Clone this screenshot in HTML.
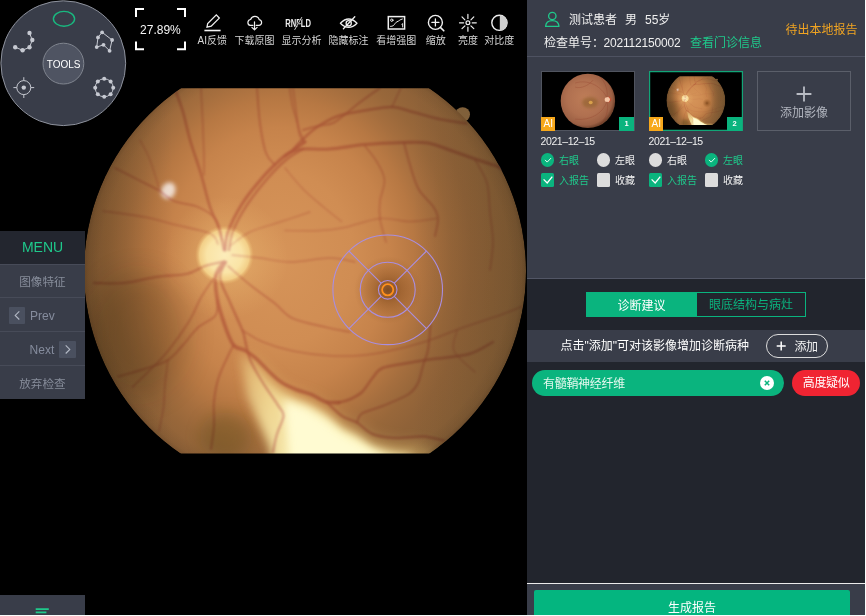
<!DOCTYPE html>
<html lang="zh">
<head>
<meta charset="utf-8">
<title>眼底影像阅片</title>
<style>
*{box-sizing:border-box;margin:0;padding:0}
html,body{width:866px;height:616px;overflow:hidden;background:#000}
body{position:relative;-webkit-font-smoothing:antialiased;font-family:"Liberation Sans","Noto Sans CJK SC",sans-serif;color:#fff;font-size:12px;line-height:1}
.abs{position:absolute}
#viewer{position:absolute;left:0;top:0;width:527px;height:616px;background:#000;overflow:hidden;will-change:transform}
#fundus{position:absolute;left:0;top:0;width:527px;height:616px}
/* tools wheel */
#wheel{position:absolute;left:0;top:0;width:128px;height:128px}
/* toolbar */
.tb{position:absolute;top:0;height:50px;text-align:center;color:#e4e4e4;font-size:10px;white-space:nowrap}
.tb svg{position:absolute;left:50%;top:0}
.tb span{position:absolute;left:50%;top:34px;transform:translateX(-50%);line-height:12px}
#zoomv{position:absolute;left:135px;top:8px;width:51px;height:42px}
#zoomv span{position:absolute;left:0;width:51px;top:15px;text-align:center;font-size:12px;line-height:14px;color:#f2f2f2}
/* left menu */
#menu{position:absolute;left:0;top:230.8px;width:84.7px;height:168.6px;overflow:hidden;background:#393d49}
#menu .row{position:absolute;left:0;width:85px;height:35px;border-top:1px solid #474b58;color:#878d9b;font-size:12px}
#menu .en{color:#858c9d}
#menu .head{position:absolute;left:0;top:0;width:85px;height:33px;background:#23262f;color:#1fc98b;font-size:14px;text-align:center;line-height:33px}
.nb{position:absolute;width:16.5px;height:16.8px;background:#4a505f;border-radius:1px}
#btm{position:absolute;left:0;top:595.2px;width:84.6px;height:21px;background:#393d49}
/* right panel */
#panel{position:absolute;left:527px;top:0;width:339px;height:616px;background:#22252d;overflow:hidden;will-change:transform}
#phead{position:absolute;left:0;top:0;width:339px;height:279.2px;background:#393d49;border-bottom:1.1px solid #525665}
.thumb{position:absolute;top:70.8px;width:94.4px;height:60.3px;background:#000;box-shadow:inset 0 0 0 1px #50545f;overflow:hidden}
.lbl{position:absolute;font-size:10px;line-height:12px;white-space:nowrap;color:#f0f0f0}
.g{color:#1fc98b}
.radio{position:absolute;width:13.6px;height:13.6px;border-radius:50%;background:#dcdcdc}
.radio.on,.cb.on{background:#0ab47e}
.cb{position:absolute;width:13.4px;height:13.4px;border-radius:1.5px;background:#dcdcdc}
.t12{font-size:12px;line-height:14px;white-space:nowrap}
.badge{position:absolute;height:14px;line-height:14px;text-align:center;color:#fff}
.badge.ai{width:14.2px;background:#f7a81b;font-size:10px;line-height:13px}
.badge.no{width:15.6px;background:#0ab47e;font-size:7.5px;font-weight:bold}
.date{font-size:10.5px;letter-spacing:-0.42px}
.radio svg,.cb svg{position:absolute;left:0;top:0}
</style>
</head>
<body>
<div id="viewer">
<svg id="fundus" width="527" height="616" viewBox="0 0 527 616">
<defs>
<clipPath id="fc"><rect x="0" y="88.3" width="527" height="365.2"/></clipPath>
<clipPath id="cc"><circle cx="305" cy="271" r="221"/></clipPath>
<radialGradient id="fg" gradientUnits="userSpaceOnUse" cx="280" cy="258" r="245" gradientTransform="translate(280 258) scale(1 1.18) translate(-280 -258)">
<stop offset="0" stop-color="#d69459"/>
<stop offset="0.3" stop-color="#d08d53"/>
<stop offset="0.45" stop-color="#c6834b"/>
<stop offset="0.55" stop-color="#b77843"/>
<stop offset="0.63" stop-color="#a56e3e"/>
<stop offset="0.7" stop-color="#98673a"/>
<stop offset="0.78" stop-color="#8f6238"/>
<stop offset="0.88" stop-color="#896037"/>
<stop offset="1" stop-color="#825d36"/>
</radialGradient>
<radialGradient id="vg" gradientUnits="userSpaceOnUse" cx="305" cy="271" r="221">
<stop offset="0.93" stop-color="#000" stop-opacity="0"/>
<stop offset="0.98" stop-color="#000" stop-opacity="0.05"/>
<stop offset="1" stop-color="#000" stop-opacity="0.14"/>
</radialGradient>
<linearGradient id="sg" gradientUnits="userSpaceOnUse" x1="85" y1="0" x2="527" y2="0">
<stop offset="0" stop-color="#1a1200" stop-opacity="0.2"/>
<stop offset="0.2" stop-color="#1a1200" stop-opacity="0"/>
<stop offset="0.74" stop-color="#1a1200" stop-opacity="0"/>
<stop offset="1" stop-color="#1a1200" stop-opacity="0.13"/>
</linearGradient>
<radialGradient id="disc" cx="0.5" cy="0.5" r="0.5">
<stop offset="0" stop-color="#fcecba"/>
<stop offset="0.6" stop-color="#fae4a6"/>
<stop offset="0.84" stop-color="#f5d48c" stop-opacity="0.92"/>
<stop offset="1" stop-color="#e8b46c" stop-opacity="0"/>
</radialGradient>
<radialGradient id="dglow" cx="0.5" cy="0.5" r="0.5">
<stop offset="0" stop-color="#ffdc8c" stop-opacity="0.4"/>
<stop offset="0.5" stop-color="#ffd888" stop-opacity="0.18"/>
<stop offset="1" stop-color="#ffd080" stop-opacity="0"/>
</radialGradient>
<radialGradient id="mac" cx="0.5" cy="0.5" r="0.5">
<stop offset="0" stop-color="#6b3a12" stop-opacity="0.75"/>
<stop offset="0.4" stop-color="#7a4416" stop-opacity="0.4"/>
<stop offset="1" stop-color="#8a5020" stop-opacity="0"/>
</radialGradient>
<filter id="b2" x="-30%" y="-30%" width="160%" height="160%"><feGaussianBlur stdDeviation="2"/></filter>
<filter id="b3" x="-30%" y="-30%" width="160%" height="160%"><feGaussianBlur stdDeviation="2.6"/></filter>
<filter id="b4" x="-30%" y="-30%" width="160%" height="160%"><feGaussianBlur stdDeviation="4"/></filter>
<filter id="b12" x="-50%" y="-50%" width="200%" height="200%"><feGaussianBlur stdDeviation="14"/></filter>
<filter id="b8" x="-30%" y="-30%" width="160%" height="160%"><feGaussianBlur stdDeviation="8"/></filter>
<filter id="b05"><feGaussianBlur stdDeviation="0.8"/></filter>
<linearGradient id="pg" gradientUnits="userSpaceOnUse" x1="243" y1="362" x2="335" y2="432">
<stop offset="0" stop-color="#f6e29a" stop-opacity="0.3"/>
<stop offset="0.45" stop-color="#f9e9a6" stop-opacity="0.75"/>
<stop offset="1" stop-color="#fcf2b8" stop-opacity="1"/>
</linearGradient>
<filter id="b1"><feGaussianBlur stdDeviation="1.3"/></filter>
<filter id="b6" x="-30%" y="-30%" width="160%" height="160%"><feGaussianBlur stdDeviation="5"/></filter>
<mask id="pm" maskUnits="userSpaceOnUse" x="100" y="300" width="427" height="250"><path filter="url(#b1)" fill="#fff" d="M150 336 L238 340 L247 353 L256.500 360 L269 372.500 L282 384 L297 391.500 L312 396.500 L327 404 L343 418 L358 424.500 L373 436 L396 440 L424 438.500 L448 443 L480 450 L480 530 L150 530 Z"/></mask>
</defs>
<g clip-path="url(#fc)" id="fg0">
<circle cx="462.6" cy="114.6" r="7.4" fill="#80603a"/>
<g clip-path="url(#cc)">
<circle cx="305" cy="271" r="221" fill="url(#fg)"/>
<!-- macula -->
<circle cx="388" cy="290" r="34" fill="url(#mac)"/>
<!-- disc -->
<circle cx="226" cy="258" r="62" fill="url(#dglow)"/>
<circle cx="224.5" cy="255" r="29.5" fill="url(#disc)"/>
<!-- white spot -->
<ellipse cx="168.5" cy="190.5" rx="7" ry="8.5" fill="#f6eae2" opacity="0.88" filter="url(#b2)" transform="rotate(25 168 190)"/>
<!-- myelinated fibres -->
<ellipse cx="226" cy="436" rx="26" ry="24" fill="#50420c" opacity="0.3" filter="url(#b8)"/>
<path filter="url(#b8)" d="M246 360 L253 392 L264 420 L274 447 L286 500 L450 500 L436 452 L418 446 L395 445 L372 440 L357 429 L342 422 L326 408 L311 400 L296 395 L281 388 L268 376 L255 363 L246 354 Z" fill="#f2d27e" opacity="0.5"/>
<g mask="url(#pm)">
<path filter="url(#b6)" d="M240 352 L247 396 L260 424 L270 446 L282 500 L425 500 L412 456 L392 453 L372 447 L357 436 L342 429 L326 415 L311 406 L296 400 L281 392 L268 381 L254 364 Z" fill="url(#pg)"/>
<path filter="url(#b4)" d="M284 400 L286 425 L294 500 L400 500 L380 456 L358 444 L340 434 L324 420 L306 408 Z" fill="#fffbd2"/>
</g>
<g fill="none" stroke="#dc9fb0" stroke-linecap="round" filter="url(#b05)" style="mix-blend-mode:multiply">
<path d="M225.0 250.0 C225.5 247.0 225.2 239.7 228.0 232.0 C230.8 224.3 236.2 213.2 242.0 204.0 C247.8 194.8 256.5 184.5 263.0 177.0 C269.5 169.5 276.2 163.3 281.0 159.0 C285.8 154.7 288.0 153.8 292.0 151.0 C296.0 148.2 302.8 143.5 305.0 142.0" stroke-width="3.1" stroke-opacity="0.77"/>
<path d="M229.0 250.0 C229.7 246.8 230.0 238.5 233.0 231.0 C236.0 223.5 241.2 213.8 247.0 205.0 C252.8 196.2 261.5 185.5 268.0 178.0 C274.5 170.5 280.2 164.8 286.0 160.0 C291.8 155.2 300.2 150.8 303.0 149.0" stroke-width="2.3" stroke-opacity="0.70"/>
<path d="M285.0 156.0 C286.0 155.3 288.0 153.2 291.0 152.0 C294.0 150.8 296.5 149.5 303.0 149.0 C309.5 148.5 319.7 149.8 330.0 149.0 C340.3 148.2 352.7 145.6 365.0 144.5 C377.3 143.4 393.5 142.8 404.0 142.5 C414.5 142.2 420.2 141.7 428.0 143.0 C435.8 144.3 443.2 147.8 451.0 150.5 C458.8 153.2 467.0 156.2 475.0 159.0 C483.0 161.8 492.3 164.2 499.0 167.0 C505.7 169.8 512.3 174.5 515.0 176.0" stroke-width="3.1" stroke-opacity="0.70"/>
<path d="M291.0 152.0 C293.0 149.8 298.5 143.2 303.0 139.0 C307.5 134.8 312.2 130.3 318.0 126.5 C323.8 122.7 329.7 118.8 338.0 116.0 C346.3 113.2 359.0 111.5 368.0 110.0 C377.0 108.5 384.5 106.7 392.0 107.0 C399.5 107.3 405.2 110.0 413.0 112.0 C420.8 114.0 430.2 117.1 439.0 119.0 C447.8 120.9 461.5 122.8 466.0 123.5" stroke-width="2.5" stroke-opacity="0.70"/>
<path d="M303.0 130.0 C305.5 129.3 313.0 127.2 318.0 126.0 C323.0 124.8 328.0 125.3 333.0 123.0 C338.0 120.7 343.7 115.3 348.0 112.0 C352.3 108.7 355.3 105.8 359.0 103.0 C362.7 100.2 366.5 97.5 370.0 95.0 C373.5 92.5 378.3 89.2 380.0 88.0" stroke-width="2.0" stroke-opacity="0.63"/>
<path d="M392.0 107.0 C393.0 104.8 396.5 97.2 398.0 94.0 C399.5 90.8 400.5 89.0 401.0 88.0" stroke-width="1.6" stroke-opacity="0.56"/>
<path d="M297.0 121.0 C296.3 118.8 294.0 112.0 293.0 108.0 C292.0 104.0 291.6 100.3 291.0 97.0 C290.4 93.7 289.8 89.5 289.5 88.0" stroke-width="1.7" stroke-opacity="0.56"/>
<path d="M305.0 142.0 C304.2 140.3 301.3 135.5 300.0 132.0 C298.7 128.5 297.5 122.8 297.0 121.0" stroke-width="1.6" stroke-opacity="0.56"/>
<path d="M365.0 146.0 C367.0 148.7 373.8 156.3 377.0 162.0 C380.2 167.7 384.0 173.5 384.5 180.0 C385.0 186.5 380.8 194.5 380.0 201.0 C379.2 207.5 379.0 212.2 380.0 219.0 C381.0 225.8 385.0 238.2 386.0 242.0" stroke-width="1.6" stroke-opacity="0.56"/>
<path d="M404.0 143.0 C405.0 146.7 407.6 157.3 410.0 165.0 C412.4 172.7 414.6 182.0 418.5 189.0 C422.4 196.0 430.2 202.0 433.5 207.0 C436.8 212.0 437.8 214.2 438.0 219.0 C438.2 223.8 435.5 233.2 435.0 236.0" stroke-width="1.9" stroke-opacity="0.63"/>
<path d="M475.0 159.5 C477.0 163.4 484.5 174.1 487.0 183.0 C489.5 191.9 489.0 203.2 490.0 213.0 C491.0 222.8 493.0 232.5 493.0 242.0 C493.0 251.5 490.5 265.3 490.0 270.0" stroke-width="1.6" stroke-opacity="0.56"/>
<path d="M285.0 168.0 C288.0 171.5 296.6 182.5 303.0 189.0 C309.4 195.5 317.1 201.6 323.5 207.0 C329.9 212.4 338.5 219.1 341.5 221.5" stroke-width="1.4" stroke-opacity="0.49"/>
<path d="M285.0 230.5 C290.9 230.5 310.6 231.0 320.5 230.5 C330.4 230.0 334.6 229.5 344.5 227.5 C354.4 225.5 369.1 219.5 380.0 218.5 C390.9 217.5 400.6 221.5 410.0 221.5 C419.4 221.5 432.1 219.0 436.5 218.5" stroke-width="1.4" stroke-opacity="0.49"/>
<path d="M224.0 250.0 C223.2 246.3 221.3 235.2 219.0 228.0 C216.7 220.8 213.0 216.0 210.0 207.0 C207.0 198.0 204.2 184.9 201.0 174.0 C197.8 163.1 193.5 151.8 190.5 141.5 C187.5 131.2 185.4 120.2 183.0 112.0 C180.6 103.8 177.2 95.3 176.0 92.0" stroke-width="2.6" stroke-opacity="0.70"/>
<path d="M204.0 175.0 C204.0 172.3 204.2 168.5 204.0 159.0 C203.8 149.5 203.0 129.8 202.5 118.0 C202.0 106.2 201.2 93.0 201.0 88.0" stroke-width="1.6" stroke-opacity="0.56"/>
<path d="M257.0 88.0 C257.5 93.9 258.5 112.7 260.0 123.5 C261.5 134.3 263.5 146.1 266.0 153.0 C268.5 159.9 273.5 163.0 275.0 165.0" stroke-width="1.9" stroke-opacity="0.63"/>
<path d="M293.0 88.0 C293.5 91.7 295.0 102.6 296.0 110.0 C297.0 117.4 297.8 127.2 299.0 132.5 C300.2 137.8 302.3 140.4 303.0 142.0" stroke-width="1.7" stroke-opacity="0.56"/>
<path d="M222.0 240.0 C220.9 236.5 219.5 224.5 215.5 219.0 C211.5 213.5 204.9 210.0 198.0 207.0 C191.1 204.0 180.5 203.8 174.0 201.0 C167.5 198.2 164.9 194.0 159.0 190.5 C153.1 187.0 145.8 183.8 138.5 180.0 C131.2 176.2 118.9 170.0 115.0 168.0" stroke-width="1.9" stroke-opacity="0.63"/>
<path d="M218.0 244.0 C216.7 242.2 217.3 236.8 210.0 233.5 C202.7 230.2 184.9 227.2 174.0 224.5 C163.1 221.8 156.3 219.2 144.5 217.0 C132.7 214.8 109.9 212.0 103.0 211.0" stroke-width="1.6" stroke-opacity="0.56"/>
<path d="M160.0 191.0 C158.3 185.8 153.3 168.5 150.0 160.0 C146.7 151.5 141.7 143.3 140.0 140.0" stroke-width="1.4" stroke-opacity="0.49"/>
<path d="M222.0 262.0 C219.2 262.7 211.0 264.0 205.0 266.0 C199.0 268.0 194.2 272.2 186.0 274.0 C177.8 275.8 166.3 275.5 156.0 277.0 C145.7 278.5 134.3 282.0 124.0 283.0 C113.7 284.0 99.0 283.0 94.0 283.0" stroke-width="2.2" stroke-opacity="0.70"/>
<path d="M222.0 268.0 C220.4 270.0 216.0 275.1 212.5 280.0 C209.0 284.9 204.9 290.6 201.0 297.5 C197.1 304.4 194.5 312.6 189.0 321.5 C183.5 330.4 174.5 342.9 168.0 351.0 C161.5 359.1 155.9 364.0 150.0 370.0 C144.1 376.0 135.4 384.2 132.5 387.0" stroke-width="1.7" stroke-opacity="0.63"/>
<path d="M217.0 300.0 C216.8 302.6 218.7 310.9 215.5 315.5 C212.3 320.1 203.4 322.6 198.0 327.5 C192.6 332.4 188.0 339.6 183.0 345.0 C178.0 350.4 174.4 356.0 168.0 360.0 C161.6 364.0 152.8 366.2 144.5 369.0 C136.2 371.8 122.4 375.2 118.0 376.5" stroke-width="1.9" stroke-opacity="0.63"/>
<path d="M168.0 360.0 C167.5 364.0 165.8 376.1 165.0 384.0 C164.2 391.9 164.5 399.7 163.5 407.5 C162.5 415.3 159.8 427.1 159.0 431.0" stroke-width="1.6" stroke-opacity="0.56"/>
<path d="M224.0 262.0 C222.7 264.2 217.2 269.1 216.0 275.0 C214.8 280.9 215.6 289.2 217.0 297.5 C218.4 305.8 221.8 316.6 224.5 324.5 C227.2 332.4 230.1 340.7 233.5 345.0 C236.9 349.3 241.3 348.3 245.0 350.5 C248.7 352.7 251.7 354.7 255.5 358.0 C259.3 361.3 263.8 366.5 268.0 370.5 C272.2 374.5 276.3 378.8 281.0 382.0 C285.7 385.2 290.9 387.4 296.0 389.5 C301.1 391.6 306.4 392.4 311.5 394.5 C316.6 396.6 321.9 400.7 326.5 402.0 C331.1 403.3 336.9 402.4 339.0 402.5" stroke-width="3.7" stroke-opacity="0.77"/>
<path d="M339.0 402.5 C340.8 402.0 345.7 401.2 349.5 399.5 C353.3 397.8 358.2 395.6 362.0 392.0 C365.8 388.4 369.1 382.0 372.5 378.0 C375.9 374.0 376.6 370.5 382.5 368.0 C388.4 365.5 399.6 364.5 408.0 363.0 C416.4 361.5 422.8 360.5 433.0 359.0 C443.2 357.5 459.0 356.8 469.0 354.0 C479.0 351.2 489.0 344.0 493.0 342.0" stroke-width="2.5" stroke-opacity="0.70"/>
<path d="M326.5 402.0 C329.1 404.3 336.9 412.6 342.0 416.0 C347.1 419.4 351.9 419.5 357.0 422.5 C362.1 425.5 366.2 431.4 372.5 434.0 C378.8 436.6 386.6 437.6 395.0 438.0 C403.4 438.4 414.9 436.1 423.0 436.5 C431.1 436.9 440.1 439.8 443.5 440.5" stroke-width="2.5" stroke-opacity="0.70"/>
<path d="M357.0 422.5 C357.8 421.0 357.8 416.2 362.0 413.5 C366.2 410.8 374.8 409.2 382.5 406.0 C390.2 402.8 402.1 398.3 408.0 394.5 C413.9 390.7 415.5 387.8 418.0 383.0 C420.5 378.2 421.3 371.0 423.0 365.5 C424.7 360.0 426.8 356.8 428.0 350.0 C429.2 343.2 430.1 328.8 430.5 324.5" stroke-width="2.0" stroke-opacity="0.63"/>
<path d="M226.0 262.0 C225.0 264.7 219.2 271.1 220.0 278.0 C220.8 284.9 226.8 294.8 230.5 303.5 C234.2 312.2 240.1 324.4 242.5 330.5 C244.9 336.6 243.7 335.0 245.0 340.0 C246.3 345.0 247.5 353.3 250.5 360.5 C253.5 367.7 258.3 375.4 263.0 383.0 C267.7 390.6 275.1 400.5 278.5 406.0 C281.9 411.5 283.8 411.3 283.5 416.0 C283.2 420.7 278.8 428.0 277.0 434.0 C275.2 440.0 273.7 449.0 273.0 452.0" stroke-width="2.5" stroke-opacity="0.70"/>
<path d="M233.5 345.0 C232.5 347.0 230.0 351.5 227.5 357.0 C225.0 362.5 220.8 370.6 218.5 378.0 C216.2 385.4 214.8 393.6 214.0 401.5 C213.2 409.4 214.5 417.6 214.0 425.5 C213.5 433.4 211.5 445.1 211.0 449.0" stroke-width="2.0" stroke-opacity="0.63"/>
<path d="M228.0 266.0 C231.9 269.3 243.7 279.8 251.5 286.0 C259.3 292.2 268.1 298.1 275.0 303.5 C281.9 308.9 284.3 314.5 293.0 318.5 C301.7 322.5 317.5 325.2 327.0 327.5 C336.5 329.8 346.2 331.2 350.0 332.0" stroke-width="1.7" stroke-opacity="0.63"/>
<path d="M242.5 330.5 C245.9 332.4 254.6 338.6 263.0 342.0 C271.4 345.4 282.3 348.8 293.0 351.0 C303.7 353.2 316.0 354.8 327.0 355.5 C338.0 356.2 348.7 356.2 359.0 355.5 C369.3 354.8 377.6 353.4 389.0 351.0 C400.4 348.6 415.2 344.9 427.5 341.0 C439.8 337.1 451.1 331.8 463.0 327.5 C474.9 323.2 489.2 319.0 499.0 315.5 C508.8 312.0 518.2 308.0 522.0 306.5" stroke-width="1.6" stroke-opacity="0.56"/>
<path d="M457.0 330.5 C456.5 333.9 451.0 344.1 454.0 351.0 C457.0 357.9 471.5 368.5 475.0 372.0" stroke-width="1.4" stroke-opacity="0.49"/>
<path d="M232.0 255.0 C236.7 255.5 250.3 256.8 260.0 258.0 C269.7 259.2 278.3 262.0 290.0 262.0 C301.7 262.0 319.2 258.0 330.0 258.0 C340.8 258.0 350.8 261.3 355.0 262.0" stroke-width="1.4" stroke-opacity="0.56"/>
<path d="M230.0 246.0 C233.3 243.7 241.7 236.0 250.0 232.0 C258.3 228.0 270.0 225.3 280.0 222.0 C290.0 218.7 305.0 213.7 310.0 212.0" stroke-width="1.4" stroke-opacity="0.49"/>
</g>
<rect x="80" y="80" width="450" height="380" fill="url(#sg)"/>
<ellipse cx="138" cy="335" rx="50" ry="62" fill="#1a1200" opacity="0.2" filter="url(#b12)"/>
<circle cx="305" cy="271" r="221" fill="url(#vg)"/>
</g>
</g>
<g clip-path="url(#fc)">
<!-- grid -->
<g fill="none" stroke="#a98ee0" stroke-width="1.1">
<circle cx="387.7" cy="289.8" r="54.8"/>
<circle cx="387.7" cy="289.8" r="27.5"/>
<circle cx="387.7" cy="289.8" r="9.3"/>
<path d="M394.3 283.2 L426.5 251 M381.1 283.2 L348.9 251 M394.3 296.4 L426.5 328.6 M381.1 296.4 L348.9 328.6"/>
</g>
<circle cx="387.7" cy="289.8" r="5.6" fill="none" stroke="#ff8f1c" stroke-width="1.8"/>
</g>
</svg>


<svg id="wheel" width="128" height="128" viewBox="0 0 128 128">
<circle cx="63.3" cy="63.2" r="62.4" fill="#393d49" stroke="#8e929d" stroke-width="1"/>
<circle cx="63.4" cy="63.6" r="20.4" fill="#4f5462" stroke="#80858f" stroke-width="1"/>
<text x="63.6" y="68" font-family="Liberation Sans, sans-serif" font-size="10" fill="#fff" text-anchor="middle">TOOLS</text>
<ellipse cx="64" cy="18.8" rx="10.6" ry="7.4" fill="none" stroke="#19b87f" stroke-width="1.4"/>
<g fill="#c6c9d1" stroke="none"><circle cx="15.2" cy="47.3" r="2.2"/><circle cx="22.6" cy="50.2" r="2.2"/><circle cx="29.5" cy="47.3" r="2.2"/><circle cx="32.3" cy="40.0" r="2.2"/><circle cx="29.5" cy="33.0" r="2.2"/><circle cx="102.1" cy="32.3" r="1.9"/><circle cx="112.1" cy="40.0" r="1.9"/><circle cx="109.6" cy="50.8" r="1.9"/><circle cx="103.5" cy="44.8" r="1.9"/><circle cx="96.7" cy="47.1" r="1.9"/><circle cx="98.0" cy="37.4" r="1.9"/><circle cx="113.2" cy="87.8" r="2.0"/><circle cx="110.6" cy="94.2" r="2.0"/><circle cx="104.2" cy="96.8" r="2.0"/><circle cx="97.8" cy="94.2" r="2.0"/><circle cx="95.2" cy="87.8" r="2.0"/><circle cx="97.8" cy="81.4" r="2.0"/><circle cx="104.2" cy="78.8" r="2.0"/><circle cx="110.6" cy="81.4" r="2.0"/><circle cx="23.8" cy="87.6" r="2.2"/></g>
<g fill="none" stroke="#c6c9d1" stroke-width="1"><polyline points="15.2,47.3 22.6,50.2 29.5,47.3 32.3,40.0 29.5,33.0"/><polygon points="102.1,32.3 112.1,40.0 109.6,50.8 103.5,44.8 96.7,47.1 98.0,37.4"/><circle cx="104.2" cy="87.8" r="9"/><circle cx="23.8" cy="87.6" r="7"/><path d="M23.8 77.2V80.6M23.8 94.6V98M13.4 87.6H16.8M30.8 87.6H34.2"/></g>
</svg>
<svg class="abs" style="left:0;top:0" width="527" height="60" viewBox="0 0 527 60">
<path d="M136 17V9H144M177 9H185V17M185 41.6V49.2H177M144 49.2H136V41.6" fill="none" stroke="#fff" stroke-width="2"/>
<text x="160.4" y="34" font-family="Liberation Sans, sans-serif" font-size="12" fill="#f4f4f4" text-anchor="middle">27.89%</text>
<g fill="none" stroke="#f0f0f0" stroke-width="1.3" stroke-linejoin="round" stroke-linecap="round">
<path d="M207 27.2L207.7 23.5L216.3 14.9L219.3 18.1L211.2 26.1Z" stroke-linejoin="miter"/><path d="M204.4 30.5H220.6" stroke-width="1.6" stroke-linecap="butt"/>
<path d="M252.9 25.4H250.2A3 3 0 0 1 250.6 19.5A4.5 4.5 0 0 1 259.2 19.6A2.95 2.95 0 0 1 259.2 25.4H256.2" stroke-width="1.2"/><path d="M254.5 21.8V29.4M251.9 27.3L254.5 29.9L257.1 27.3" stroke-width="1.2"/>
<path d="M340.4 23.2Q348.7 14.8 357 23.2Q348.7 31.4 340.4 23.2Z"/><circle cx="348.7" cy="23.2" r="2.6"/><path d="M343.4 28.8L354.8 16.8"/>
<rect x="388.3" y="16.6" width="16.3" height="12.4" stroke-width="1.5" stroke-linejoin="miter"/><circle cx="391.8" cy="20.2" r="1.2" stroke-width="1"/><path d="M390.6 26.4C395 26.4 394.4 22.8 397 21.8S399.6 19.6 402.4 19" stroke-width="1"/><path d="M401.8 24.2L402.6 23.6V27" stroke-width="0.9"/>
<circle cx="435.4" cy="22.4" r="7" stroke-width="1.4"/><path d="M431.9 22.4H438.9M435.4 18.9V25.9"/><path d="M440.6 27.6L443.8 30.8" stroke-width="1.6"/>
<circle cx="467.9" cy="22.8" r="1.9" stroke-width="1.2"/><path d="M472.2 22.8L476.3 22.8M470.9 25.8L473.8 28.7M467.9 27.1L467.9 31.2M464.9 25.8L462.0 28.7M463.6 22.8L459.5 22.8M464.9 19.8L462.0 16.9M467.9 18.5L467.9 14.4M470.9 19.8L473.8 16.9" stroke-width="1.2"/>
<circle cx="499.4" cy="22.8" r="7.6" stroke-width="1.4"/></g>
<path d="M499.8 15.2A7.6 7.6 0 0 1 499.8 30.4Z" fill="#cfcfcf"/>
<text x="285.2" y="27.4" font-family="Liberation Sans, sans-serif" font-weight="bold" font-size="11" fill="#ededed" textLength="25.8" lengthAdjust="spacingAndGlyphs">RNFLD</text><path d="M294.4 30.2L302.1 16.8" stroke="#000" stroke-width="1.8"/><path d="M294.6 29.9L301.9 17.1" stroke="#e8e8e8" stroke-width="0.9"/>
<g font-family="Liberation Sans, Noto Sans CJK SC, sans-serif" font-size="10" fill="#d6d6d6" text-anchor="middle"><text x="212.2" y="43.6">AI反馈</text><text x="254.4" y="43.6">下载原图</text><text x="301.4" y="43.6">显示分析</text><text x="348.6" y="43.6">隐藏标注</text><text x="396.3" y="43.6">看增强图</text><text x="435.7" y="43.6">缩放</text><text x="467.9" y="43.6">亮度</text><text x="499.2" y="43.6">对比度</text></g>
</svg>
<div id="menu">
<div class="head">MENU</div>
<div class="row" style="top:33px"><span class="abs" style="right:19.4px;top:10px;line-height:14px;font-size:11.6px">图像特征</span></div>
<div class="row" style="top:66px"><span class="nb" style="left:8.8px;top:9px"><svg width="17" height="17" viewBox="0 0 17 17"><path d="M10.3 4.3L6.2 8.4L10.3 12.5" fill="none" stroke="#b4bac6" stroke-width="1.1"/></svg></span><span class="abs en" style="left:30px;top:11px;line-height:14px">Prev</span></div>
<div class="row" style="top:100px"><span class="abs en" style="left:29.6px;top:11px;line-height:14px">Next</span><span class="nb" style="left:59.3px;top:9px"><svg width="17" height="17" viewBox="0 0 17 17"><path d="M6.7 4.3L10.8 8.4L6.7 12.5" fill="none" stroke="#b4bac6" stroke-width="1.1"/></svg></span></div>
<div class="row" style="top:134px"><span class="abs" style="right:19.4px;top:11px;line-height:14px;font-size:11.6px">放弃检查</span></div>
</div>
<div id="btm"><svg class="abs" style="left:34px;top:12px" width="18" height="8" viewBox="0 0 18 8"><path d="M1.7 2.1H14.8M1.7 5.4H12.4" stroke="#1fc98b" stroke-width="1.6" fill="none"/></svg></div>

</div>
<div id="panel">
<div id="phead"></div>
<!-- header -->
<svg class="abs" style="left:17px;top:11px" width="17" height="17" viewBox="0 0 17 17"><g fill="none" stroke="#1fc98b" stroke-width="1.3"><circle cx="8.3" cy="5" r="3.7"/><path d="M1.6 15.4C1.9 11.6 4.6 9.6 8.3 9.6S14.7 11.6 15 15.4Z" stroke-linejoin="round"/></g></svg>
<span class="abs t12" style="left:42px;top:13.3px;color:#f0f0f0">测试患者</span>
<span class="abs t12" style="left:98px;top:13.3px;color:#f0f0f0">男</span>
<span class="abs t12" style="left:118px;top:13.3px;color:#f0f0f0">55岁</span>
<span class="abs t12" style="left:17px;top:36px;color:#f0f0f0">检查单号：</span>
<span class="abs t12" style="left:76.5px;top:36px;color:#f0f0f0;letter-spacing:-0.18px">202112150002</span>
<span class="abs t12 g" style="left:163px;top:36px">查看门诊信息</span>
<span class="abs t12" style="left:258.6px;top:22.9px;color:#f0a422">待出本地报告</span>
<div class="abs" style="left:0;top:56px;width:339px;height:1px;background:#4e5261"></div>
<!-- thumbs -->
<div class="thumb" style="left:13.6px">
<svg class="abs" style="left:1px;top:1px" width="92" height="58" viewBox="0 0 92 58"><defs><radialGradient id="t1g" cx="0.45" cy="0.45" r="0.55"><stop offset="0" stop-color="#be7d58"/><stop offset="0.6" stop-color="#b07050"/><stop offset="0.9" stop-color="#9c6044"/><stop offset="1" stop-color="#74452e"/></radialGradient>
<filter id="tb1" x="-50%" y="-50%" width="200%" height="200%"><feGaussianBlur stdDeviation="1.6"/></filter><filter id="tb1b" x="-50%" y="-50%" width="200%" height="200%"><feGaussianBlur stdDeviation="0.6"/></filter></defs>
<g transform="translate(-0.9 -0.9)"><circle cx="46.8" cy="29.8" r="27.2" fill="url(#t1g)"/><ellipse cx="49" cy="31.4" rx="8" ry="5.6" fill="#946432" opacity="0.7" filter="url(#tb1)"/><ellipse cx="49.6" cy="31.4" rx="2" ry="1.7" fill="#d8a04c" filter="url(#tb1b)"/><circle cx="66.2" cy="28.4" r="2.6" fill="#f6c8a8" filter="url(#tb1b)"/><path d="M67.6 25.6A3 3 0 0 1 67.6 31.2" fill="none" stroke="#e0452c" stroke-width="1" opacity="0.7" filter="url(#tb1b)"/>
<g fill="none" stroke="#8a3524" stroke-width="0.45" opacity="0.55"><path d="M66 27C60 14 46 8 34 12M66 30C62 42 50 50 34 48M66 26C67 16 62 8 58 5M66 31C68 40 64 50 58 54M52 9C48 14 40 18 34 16"/></g></g></svg>
<span class="badge ai" style="left:0.6px;top:46.1px">AI</span><span class="badge no" style="left:78.2px;top:46.1px">1</span>
</div>
<div class="thumb" style="left:121.6px;box-shadow:inset 0 0 0 1.2px #12a577">
<svg class="abs" style="left:1px;top:1px" width="92" height="58" viewBox="0 0 92 58"><use href="#fg0" transform="translate(5.18 -7.58) scale(0.1335)"/></svg>
<span class="badge ai" style="left:0.6px;top:46.1px">AI</span><span class="badge no" style="left:78.2px;top:46.1px">2</span>
</div>
<div class="thumb" style="left:229.8px;background:transparent;box-shadow:inset 0 0 0 1px #5b5f6a">
<svg class="abs" style="left:39.5px;top:15px" width="16" height="16" viewBox="0 0 16 16"><path d="M8 0.6V15.4M0.6 8H15.4" stroke="#b9bcc4" stroke-width="1.8" fill="none"/></svg>
<span class="abs t12" style="left:0;width:94.6px;top:35px;text-align:center;color:#b2b6bf">添加影像</span>
</div>
<!-- thumb 1 meta -->
<span class="lbl date" style="left:13.6px;top:135.4px">2021–12–15</span>
<span class="radio on" style="left:13.7px;top:153.1px"><svg width="13" height="13" viewBox="0 0 13 13"><path d="M4 6.9L6.2 9.1L10 5.1" fill="none" stroke="#e8fff6" stroke-width="1"/></svg></span><span class="lbl g" style="left:32px;top:154.6px">右眼</span>
<span class="radio" style="left:69.8px;top:153.1px"></span><span class="lbl" style="left:88px;top:154.6px">左眼</span>
<span class="cb on" style="left:13.7px;top:173.4px"><svg width="13" height="13" viewBox="0 0 13 13"><path d="M2.6 6.4L6.2 10L11.3 3.7" fill="none" stroke="#fff" stroke-width="1.3"/></svg></span><span class="lbl g" style="left:32px;top:174.7px">入报告</span>
<span class="cb" style="left:69.8px;top:173.4px"></span><span class="lbl" style="left:88px;top:174.7px">收藏</span>
<!-- thumb 2 meta -->
<span class="lbl date" style="left:121.6px;top:135.4px">2021–12–15</span>
<span class="radio" style="left:121.7px;top:153.1px"></span><span class="lbl" style="left:140px;top:154.6px">右眼</span>
<span class="radio on" style="left:177.8px;top:153.1px"><svg width="13" height="13" viewBox="0 0 13 13"><path d="M4 6.9L6.2 9.1L10 5.1" fill="none" stroke="#e8fff6" stroke-width="1"/></svg></span><span class="lbl g" style="left:196px;top:154.6px">左眼</span>
<span class="cb on" style="left:121.7px;top:173.4px"><svg width="13" height="13" viewBox="0 0 13 13"><path d="M2.6 6.4L6.2 10L11.3 3.7" fill="none" stroke="#fff" stroke-width="1.3"/></svg></span><span class="lbl g" style="left:140px;top:174.7px">入报告</span>
<span class="cb" style="left:177.8px;top:173.4px"></span><span class="lbl" style="left:196px;top:174.7px">收藏</span>
<!-- tabs -->
<div class="abs" style="left:59px;top:291.5px;width:220px;height:25.6px;border:1px solid #0ab47e"></div>
<div class="abs t12" style="left:59px;top:291.5px;width:111px;height:25.6px;background:#0ab47e;color:#fff;text-align:center;line-height:28px">诊断建议</div>
<div class="abs t12 " style="left:170px;top:292px;width:108px;height:24px;color:#0ab47e;text-align:center;line-height:26px">眼底结构与病灶</div>
<!-- add row -->
<div class="abs" style="left:0;top:330px;width:339px;height:31.8px;background:#393d49"></div>
<span class="abs" style="left:33.4px;top:339.4px;font-size:12px;line-height:15px;color:#fff;white-space:nowrap">点击"添加"可对该影像增加诊断病种</span>
<div class="abs" style="left:239.2px;top:333.8px;width:61.4px;height:24.2px;border:1.2px solid #dcdcdc;border-radius:12.1px"></div>
<svg class="abs" style="left:249.2px;top:340.8px" width="10" height="10" viewBox="0 0 10 10"><path d="M5.2 0.5V9.5M0.7 5H9.7" stroke="#fff" stroke-width="1.5" fill="none"/></svg>
<span class="abs t12" style="left:267.4px;top:340px;color:#f2f2f2;letter-spacing:-0.4px">添加</span>
<!-- pills -->
<div class="abs" style="left:4.6px;top:370px;width:252.2px;height:25.7px;border-radius:12.9px;background:#0ab47e"></div>
<span class="abs t12" style="left:16px;top:377.1px;color:#e4f8ee;letter-spacing:-0.3px">有髓鞘神经纤维</span>
<svg class="abs" style="left:231.7px;top:375.1px" width="16" height="16" viewBox="0 0 16 16"><circle cx="8" cy="8" r="7" fill="#fff"/><path d="M5.8 5.8L10.2 10.2M10.2 5.8L5.8 10.2" stroke="#0ab47e" stroke-width="1.5" fill="none"/></svg>
<div class="abs t12" style="left:265.1px;top:370px;width:68px;height:25.7px;border-radius:12.9px;background:#f02432;color:#fff;text-align:center;line-height:27.6px;letter-spacing:-0.3px">高度疑似</div>
<!-- footer -->
<div class="abs" style="left:0;top:582.7px;width:339px;height:34px;background:#393d49;border-top:1.3px solid #ececec"></div>
<div class="abs t12" style="left:7.4px;top:590.3px;width:315.4px;height:30px;border-radius:2px;background:#04b57f;color:#fff;text-align:center;line-height:36.6px">生成报告</div>

</div>
<div id="edgeR" class="abs" style="left:865px;top:0;width:1px;height:616px;background:#fbfbfb;z-index:9"></div>
<div id="edgeB" class="abs" style="left:0;top:614.6px;width:866px;height:1.4px;background:#fbfbfb;z-index:9"></div>
</body>
</html>
